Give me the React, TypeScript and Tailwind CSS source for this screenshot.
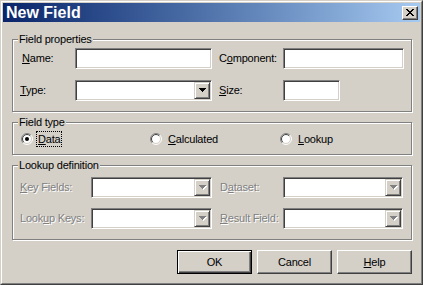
import React from "react";

const sunken =
  "bg-white border border-t-[#808080] border-l-[#808080] border-r-white border-b-white shadow-[inset_1px_1px_0_#404040,inset_-1px_-1px_0_#d4d0c8]";

const groupBox =
  "ml-[9px] mr-[8px] border border-[#808080] shadow-[inset_1px_1px_0_#fff,1px_1px_0_#fff]";

function Legend({ children }: { children: React.ReactNode }) {
  return (
    <span className="block w-fit -mt-[7px] ml-[5px] px-[1px] bg-[#d4d0c8] leading-[13px]">
      {children}
    </span>
  );
}

function TextBox({ w }: { w: string }) {
  return <div className={`${w} h-[21px] ${sunken}`} />;
}

function Arrow({ disabled }: { disabled?: boolean }) {
  return (
    <svg width="8" height="5" viewBox="0 0 8 5" shapeRendering="crispEdges">
      {disabled && (
        <g fill="#fff">
          <rect x="1" y="1" width="7" height="1" />
          <rect x="2" y="2" width="5" height="1" />
          <rect x="3" y="3" width="3" height="1" />
          <rect x="4" y="4" width="1" height="1" />
        </g>
      )}
      <g fill={disabled ? "#808080" : "#000"}>
        <rect x="0" y="0" width="7" height="1" />
        <rect x="1" y="1" width="5" height="1" />
        <rect x="2" y="2" width="3" height="1" />
        <rect x="3" y="3" width="1" height="1" />
      </g>
    </svg>
  );
}

function Combo({ w, disabled }: { w: string; disabled?: boolean }) {
  return (
    <div className={`${w} h-[21px] p-[1px] flex justify-end ${sunken}`}>
      <div className="w-[16px] h-full bg-[#d4d0c8] border border-t-[#d4d0c8] border-l-[#d4d0c8] border-r-[#404040] border-b-[#404040] shadow-[inset_1px_1px_0_#fff,inset_-1px_-1px_0_#808080] flex items-center justify-center pl-[1px]">
        <Arrow disabled={disabled} />
      </div>
    </div>
  );
}

function Radio({ checked }: { checked?: boolean }) {
  return (
    <svg width="12" height="12" viewBox="0 0 12 12" className="shrink-0">
      <circle cx="6" cy="6" r="5" fill="#fff" />
      <path d="M2.111 9.889 A5.5 5.5 0 0 1 9.889 2.111" stroke="#808080" fill="none" />
      <path d="M9.889 2.111 A5.5 5.5 0 0 1 2.111 9.889" stroke="#fff" fill="none" />
      <path d="M2.818 9.182 A4.5 4.5 0 0 1 9.182 2.818" stroke="#404040" fill="none" />
      <path d="M9.182 2.818 A4.5 4.5 0 0 1 2.818 9.182" stroke="#d4d0c8" fill="none" />
      {checked && <circle cx="6" cy="6" r="2" fill="#000" />}
    </svg>
  );
}

function Dim({ children, w }: { children: React.ReactNode; w: string }) {
  return (
    <span className={`${w} text-[#808080] [text-shadow:1px_1px_0_#fff]`}>
      {children}
    </span>
  );
}

export default function App() {
  return (
    <div className="w-[423px] h-[285px] bg-[#d4d0c8] border border-t-[#d4d0c8] border-l-[#d4d0c8] border-r-[#404040] border-b-[#404040] font-['Liberation_Sans',Arial,sans-serif] text-[11px] text-black tracking-[-0.2px]">
      <div className="h-full border border-t-white border-l-white border-r-[#808080] border-b-[#808080] p-[1px] flex flex-col">
        {/* title bar */}
        <div className="h-[19px] shrink-0 bg-linear-to-r from-[#0a246a] to-[#a6caf0] flex items-center pl-[3px] pr-[2px]">
          <span className="flex-1 text-white font-bold text-[16px] leading-[19px] tracking-normal">
            New Field
          </span>
          <div className="w-[16px] h-[14px] bg-[#d4d0c8] border border-t-white border-l-white border-r-[#404040] border-b-[#404040] shadow-[inset_-1px_-1px_0_#808080] flex items-center justify-center">
            <svg width="8" height="7" viewBox="0 0 8 7" shapeRendering="crispEdges">
              <g fill="#000">
                <rect x="0" y="0" width="2" height="1" />
                <rect x="6" y="0" width="2" height="1" />
                <rect x="1" y="1" width="2" height="1" />
                <rect x="5" y="1" width="2" height="1" />
                <rect x="2" y="2" width="4" height="1" />
                <rect x="3" y="3" width="2" height="1" />
                <rect x="2" y="4" width="4" height="1" />
                <rect x="1" y="5" width="2" height="1" />
                <rect x="5" y="5" width="2" height="1" />
                <rect x="0" y="6" width="2" height="1" />
                <rect x="6" y="6" width="2" height="1" />
              </g>
            </svg>
          </div>
        </div>

        {/* Field properties */}
        <div className={`mt-[17px] ${groupBox}`}>
          <Legend>Field properties</Legend>
          <div className="mt-[2px] pl-[7px] pb-[10px] flex flex-col gap-[11px]">
            <div className="flex items-center h-[21px]">
              <span className="w-[55px] pl-[2px]">
                <u>N</u>ame:
              </span>
              <TextBox w="w-[137px]" />
              <span className="w-[64px] ml-[7px]">
                C<u>o</u>mponent:
              </span>
              <TextBox w="w-[121px]" />
            </div>
            <div className="flex items-center h-[21px]">
              <span className="w-[55px]">
                <u>T</u>ype:
              </span>
              <Combo w="w-[137px]" />
              <span className="w-[64px] ml-[7px]">
                <u>S</u>ize:
              </span>
              <TextBox w="w-[57px]" />
            </div>
          </div>
        </div>

        {/* Field type */}
        <div className={`mt-[10px] ${groupBox}`}>
          <Legend>Field type</Legend>
          <div className="mt-[2px] pl-[8px] pb-[7px] flex items-center h-[16px] box-content">
            <div className="w-[129px] flex items-center">
              <Radio checked />
              <span className="ml-[3px] px-[1px] leading-[14px] border border-dotted border-black">
                <u>D</u>ata
              </span>
            </div>
            <div className="w-[130px] flex items-center">
              <Radio />
              <span className="ml-[6px]">
                <u>C</u>alculated
              </span>
            </div>
            <div className="flex items-center">
              <Radio />
              <span className="ml-[6px]">
                <u>L</u>ookup
              </span>
            </div>
          </div>
        </div>

        {/* Lookup definition */}
        <div className={`mt-[10px] ${groupBox}`}>
          <Legend>Lookup definition</Legend>
          <div className="mt-[5px] pl-[7px] pb-[10px] flex flex-col gap-[10px]">
            <div className="flex items-center h-[21px]">
              <Dim w="w-[71px]">
                <u>K</u>ey Fields:
              </Dim>
              <Combo w="w-[121px]" disabled />
              <Dim w="w-[63px] ml-[8px]">
                D<u>a</u>taset:
              </Dim>
              <Combo w="w-[120px]" disabled />
            </div>
            <div className="flex items-center h-[21px]">
              <Dim w="w-[71px]">
                Look<u>u</u>p Keys:
              </Dim>
              <Combo w="w-[121px]" disabled />
              <Dim w="w-[63px] ml-[8px]">
                <u>R</u>esult Field:
              </Dim>
              <Combo w="w-[120px]" disabled />
            </div>
          </div>
        </div>

        {/* buttons */}
        <div className="mt-[10px] mr-[8px] flex justify-end gap-[5px]">
          <button className="w-[75px] h-[24px] bg-[#d4d0c8] border border-black shadow-[inset_1px_1px_0_#fff,inset_-1px_-1px_0_#404040,inset_-2px_-2px_0_#808080]">
            OK
          </button>
          <button className="w-[75px] h-[24px] bg-[#d4d0c8] border border-t-white border-l-white border-r-[#404040] border-b-[#404040] shadow-[inset_-1px_-1px_0_#808080]">
            Cancel
          </button>
          <button className="w-[75px] h-[24px] bg-[#d4d0c8] border border-t-white border-l-white border-r-[#404040] border-b-[#404040] shadow-[inset_-1px_-1px_0_#808080]">
            <u>H</u>elp
          </button>
        </div>
      </div>
    </div>
  );
}
